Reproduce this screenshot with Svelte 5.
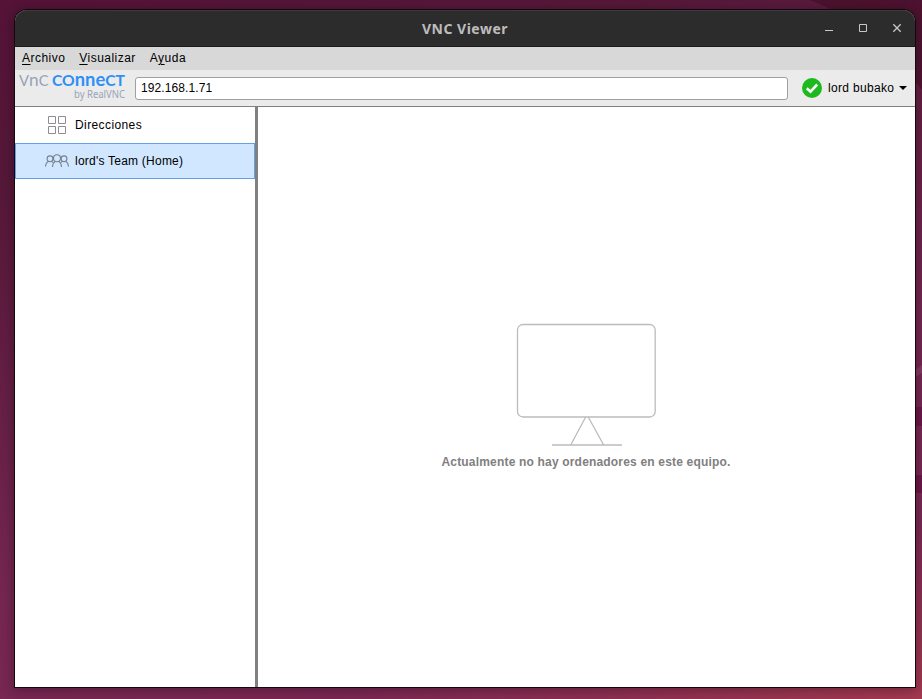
<script>
  const menus = [
    { before: '', key: 'A', after: 'rchivo' },
    { before: '', key: 'V', after: 'isualizar' },
    { before: 'A', key: 'y', after: 'uda' }
  ];
  let address = $state('192.168.1.71');
</script>

<div class="desktop">
  <svg class="wallpaper" width="922" height="699" viewBox="0 0 922 699" aria-hidden="true">
    <path d="M810 0H922V90Q875 25 810 0Z" fill="#3b0a20" opacity=".5" />
    <path d="M914 371L922 365V373L914 378Z" fill="#8b4168" opacity=".7" />
    <path d="M914 407H922V426H914ZM914 475H922V493H914Z" fill="#6c1649" />
  </svg>
  <div class="window">
    <header class="titlebar">
      <span class="side"></span>
      <h1>VNC Viewer</h1>
      <span class="side controls">
        <svg width="92" height="20" viewBox="0 0 92 20" fill="none" stroke="#c8c8c8">
          <path d="M9 12.5H17" />
          <path d="M43.5 6.5H50.5V13.5H43.5Z" />
          <path d="M77.3 6.3L84.7 13.7M84.7 6.3L77.3 13.7" stroke-width="1.3" />
        </svg>
      </span>
    </header>
    <nav class="menubar">
      {#each menus as m}
        <span class="menu">{m.before}<u>{m.key}</u>{m.after}</span>
      {/each}
    </nav>
    <div class="toolbar">
      <svg class="logo" width="112" height="48" viewBox="0 -6 112 48">
        <text x="4" y="16.2" class="vnc" textLength="29.5" lengthAdjust="spacingAndGlyphs">V<tspan class="tall">n</tspan>C</text>
        <text x="37" y="16.2" class="connect" textLength="73" lengthAdjust="spacingAndGlyphs">CO<tspan class="tall">nne</tspan>CT</text>
        <text x="59" y="28.3" class="by" textLength="51" lengthAdjust="spacingAndGlyphs">by RealVNC</text>
      </svg>
      <input bind:value={address} spellcheck="false" aria-label="VNC" />
      <div class="account">
        <svg width="20" height="20" viewBox="0 0 20 20">
          <circle cx="10" cy="10" r="10" fill="#1db91d" />
          <path d="M4.8 10.3L8.5 13.6L15.2 6.5" fill="none" stroke="#fff" stroke-width="2.6" />
        </svg>
        <span class="name">lord bubako</span>
        <svg class="arrow" width="8" height="4" viewBox="0 0 8 4"><path d="M0 0H8L4 4Z" /></svg>
      </div>
    </div>
    <main>
      <aside>
        <div class="item">
          <svg width="24" height="24" viewBox="0 0 24 24" fill="none" stroke="#8c8c92">
            <path d="M3.5 3.5H10.5V10.5H3.5ZM13.5 3.5H20.5V10.5H13.5ZM3.5 13.5H10.5V20.5H3.5ZM13.5 13.5H20.5V20.5H13.5Z" />
          </svg>
          <span class="direct">Direcciones</span>
        </div>
        <div class="item selected">
          <svg width="24" height="24" viewBox="0 0 24 24" fill="none" stroke="#75808c" stroke-width="1.1">
            <circle cx="12" cy="9.2" r="3.5" />
            <circle cx="5" cy="9.8" r="2.9" />
            <circle cx="19" cy="9.8" r="2.9" />
            <path d="M7.5 18Q7.7 14 10.2 12.4M16.5 18Q16.3 14 13.8 12.4" />
            <path d="M.5 17.5Q.7 13.6 3.4 12.3M6.6 12.3L8.3 13.7M23.5 17.5Q23.3 13.6 20.6 12.3M17.4 12.3L15.7 13.7" />
          </svg>
          <span class="team">lord's Team (Home)</span>
        </div>
      </aside>
      <section>
        <svg width="140" height="124" viewBox="-.7 0 140 124" fill="none" stroke="#bcbcbe" stroke-width="1.3">
          <rect x=".8" y="1.5" width="137.7" height="92.5" rx="5.5" />
          <path d="M35.3 122H105.3M54 122L69 94M71.5 94L87 122" />
        </svg>
        <p>Actualmente no hay ordenadores en este equipo.</p>
      </section>
    </main>
  </div>
</div>

<style>
  .desktop {
    position: relative;
    box-sizing: border-box;
    width: 922px;
    height: 699px;
    padding: 10px 7px 12px 15px;
    overflow: hidden;
    background: linear-gradient(163deg, #541337 0%, #561839 20%, #742650 60%, #7b2853 82%, #a43950 100%);
    font: 12px/16px "Liberation Sans", Arial, sans-serif;
    color: #000;
  }
  .wallpaper {
    position: absolute;
    inset: 0;
  }
  .window {
    position: relative;
    display: flex;
    flex-direction: column;
    width: 900px;
    height: 677px;
    border-radius: 12px 12px 0 0;
    background: #fff;
    box-shadow: 0 0 0 1px #17060f, 0 2px 12px 2px rgba(0, 0, 0, .28);
  }
  .titlebar {
    box-sizing: border-box;
    height: 37px;
    flex: none;
    display: flex;
    align-items: center;
    border-radius: 12px 12px 0 0;
    background: #2c2c2c;
    border-bottom: 1px solid #1b1b1b;
    box-shadow: inset 0 1px #3b3b3b;
  }
  .side {
    flex: 1 1 0;
    box-sizing: border-box;
    padding: 0 7px;
  }
  .controls {
    display: flex;
    justify-content: flex-end;
  }
  h1 {
    margin: 1px 0 0;
    font: bold 14px/20px "Noto Sans", sans-serif;
    letter-spacing: .5px;
    color: #bdbdbd;
  }
  .menubar {
    box-sizing: border-box;
    height: 23px;
    flex: none;
    display: flex;
    align-items: center;
    gap: 14px;
    padding: 0 0 2px 7px;
    background: #d8d8d8;
  }
  .menu { letter-spacing: .47px; }
  u { text-underline-offset: 2px; text-decoration-thickness: 1px; }
  .toolbar {
    box-sizing: border-box;
    height: 37px;
    flex: none;
    display: flex;
    align-items: center;
    background: #ebebeb;
    border-bottom: 1px solid #808080;
  }
  .logo { margin: -6px 8px -6px 0; flex: none; }
  .logo text { font-family: Lato, sans-serif; font-size: 15.4px; }
  .logo .vnc { fill: #98a3b5; }
  .logo .connect { font-weight: 700; fill: #2f8ff5; }
  .logo .tall { font-size: 18px; }
  .logo .by { font: 10px "Noto Sans", sans-serif; fill: #98a3b5; }
  input {
    box-sizing: border-box;
    width: 653px;
    height: 23px;
    margin: 0;
    padding: 0 5px;
    border: 1px solid #a0a0a0;
    border-radius: 3px;
    background: #fff;
    font: inherit;
    letter-spacing: .1px;
    color: #000;
    outline: none;
  }
  .account {
    display: flex;
    align-items: center;
    margin-left: 14px;
  }
  .name { margin-left: 6px; letter-spacing: .33px; }
  .arrow { margin-left: 5px; }
  main { flex: 1; display: flex; }
  aside {
    width: 240px;
    border-right: 3px solid #808080;
  }
  .item {
    box-sizing: border-box;
    height: 36px;
    display: flex;
    align-items: center;
    gap: 6px;
    padding-left: 30px;
    border: 0 solid #62a2e4;
  }
  .item.selected {
    padding-left: 29px;
    border-width: 1px;
    background: #d1e7ff;
  }
  .direct { letter-spacing: .4px; }
  .team { letter-spacing: .23px; }
  section {
    flex: 1;
    display: flex;
    flex-direction: column;
    align-items: center;
    padding: 216px 1px 0 0;
  }
  p {
    margin: 7px 0 0;
    font-weight: bold;
    font-size: 12px;
    letter-spacing: .18px;
    color: #808080;
    white-space: nowrap;
  }
</style>
